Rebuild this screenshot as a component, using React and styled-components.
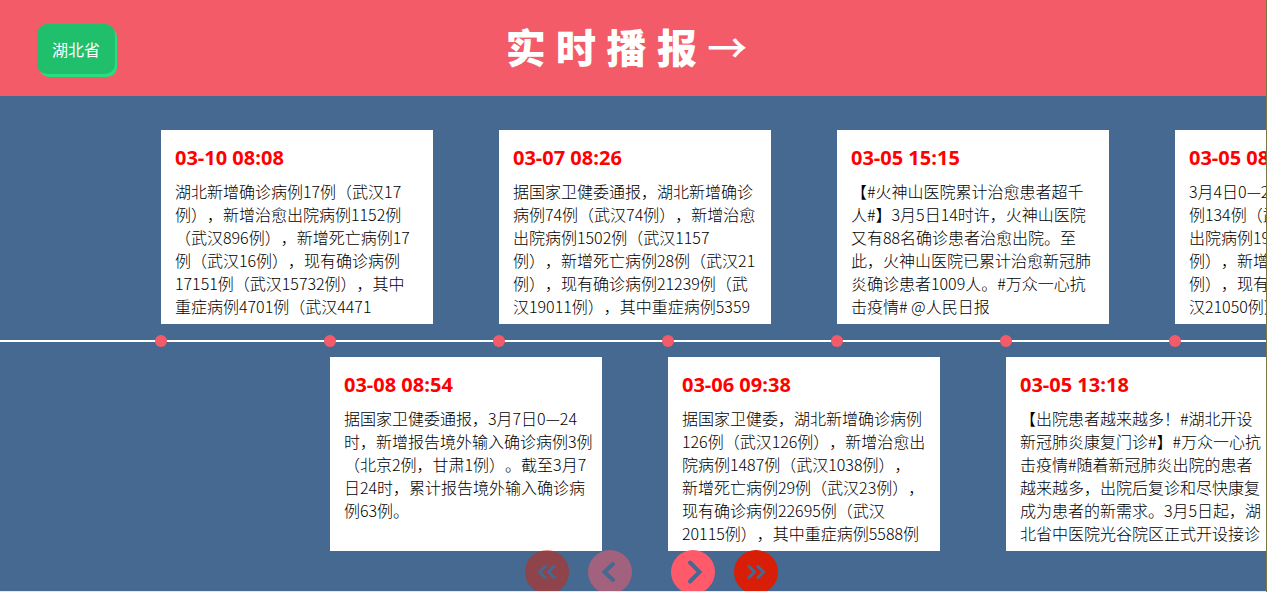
import React from "react";
import styled, { createGlobalStyle } from "styled-components";

const GlobalStyle = createGlobalStyle`
  *, *::before, *::after { box-sizing: border-box; }
  body {
    margin: 0;
    background: #dfe8f2;
    font-family: "Open Sans", "Noto Sans CJK SC", sans-serif;
    text-spacing-trim: space-all;
  }
`;

const Page = styled.div`
  min-height: 100vh;
  overflow: hidden;
  border-right: 1px solid #7a7346;
`;

const Header = styled.header`
  display: grid;
  grid-template-columns: 1fr auto 1fr;
  align-items: center;
  height: 96px;
  padding: 0 50px 0 37px;
  background: #f45b69;
`;

const RegionButton = styled.button`
  justify-self: start;
  width: 78px;
  height: 50px;
  margin-top: 2px;
  padding: 0;
  border: 0;
  border-radius: 10px;
  background: #20bf6b;
  box-shadow: 2px 3px 0 #26de81;
  color: #fff;
  font: 400 16px/24px "Noto Sans CJK SC", sans-serif;
`;

const Title = styled.h1`
  margin: 0;
  color: #fff;
  font-size: 40px;
  line-height: 56px;
  font-weight: 900;
  white-space: nowrap;
`;

const Arrow = styled.span`
  font-weight: 500;
`;

const Stage = styled.main`
  padding-top: 34px;
  background: #456990;
`;

const Timeline = styled.div`
  display: grid;
  grid-template-columns: 161px repeat(8, 169px);
  grid-template-rows: 194px 33px 194px;
  align-items: center;
`;

const Card = styled.article`
  grid-column: ${(p) => p.$slot + 2} / span 2;
  grid-row: ${(p) => (p.$slot % 2 ? 3 : 1)};
  width: 272px;
  height: 194px;
  padding: 14px;
  overflow: hidden;
  background: #fff;
`;

const Time = styled.time`
  display: block;
  margin-bottom: 8px;
  color: #f00;
  font-size: 20px;
  line-height: 28px;
  font-weight: 700;
`;

const Text = styled.p`
  margin: 0;
  color: #000;
  font: 300 16px/23px "Noto Sans CJK SC", sans-serif;
  white-space: pre;
`;

const Axis = styled.div`
  grid-column: 1 / -1;
  grid-row: 2;
  height: 2px;
  background: #fff;
`;

const Dot = styled.span`
  grid-column: ${(p) => p.$slot + 2};
  grid-row: 2;
  width: 12px;
  height: 12px;
  margin-left: -6px;
  border-radius: 50%;
  background: #f45b69;
`;

const Controls = styled.nav`
  position: relative;
  display: flex;
  justify-content: center;
  gap: 39px;
  height: 41px;
  margin-top: -1px;
  padding-left: 36px;
  overflow: hidden;
`;

const Pair = styled.div`
  display: flex;
  gap: 19px;
`;

const RoundButton = styled.button`
  display: grid;
  place-items: center;
  width: 44px;
  height: 44px;
  padding: 0;
  border: 0;
  border-radius: 50%;
  background: ${(p) => (p.$jump ? "#d81e06" : "#ff5a69")};
  opacity: ${(p) => (p.disabled ? 0.5 : 1)};

  svg {
    fill: none;
    stroke: #456990;
    stroke-linejoin: miter;
  }
`;

const items = [
  {
    time: "03-10 08:08",
    text: `湖北新增确诊病例17例（武汉17
例），新增治愈出院病例1152例
（武汉896例），新增死亡病例17
例（武汉16例），现有确诊病例
17151例（武汉15732例），其中
重症病例4701例（武汉4471`,
  },
  {
    time: "03-08 08:54",
    text: `据国家卫健委通报，3月7日0—24
时，新增报告境外输入确诊病例3例
（北京2例，甘肃1例）。截至3月7
日24时，累计报告境外输入确诊病
例63例。`,
  },
  {
    time: "03-07 08:26",
    text: `据国家卫健委通报，湖北新增确诊
病例74例（武汉74例），新增治愈
出院病例1502例（武汉1157
例），新增死亡病例28例（武汉21
例），现有确诊病例21239例（武
汉19011例），其中重症病例5359`,
  },
  {
    time: "03-06 09:38",
    text: `据国家卫健委，湖北新增确诊病例
126例（武汉126例），新增治愈出
院病例1487例（武汉1038例），
新增死亡病例29例（武汉23例），
现有确诊病例22695例（武汉
20115例），其中重症病例5588例`,
  },
  {
    time: "03-05 15:15",
    text: `【#火神山医院累计治愈患者超千
人#】3月5日14时许，火神山医院
又有88名确诊患者治愈出院。至
此，火神山医院已累计治愈新冠肺
炎确诊患者1009人。#万众一心抗
击疫情# @人民日报`,
  },
  {
    time: "03-05 13:18",
    text: `【出院患者越来越多！#湖北开设
新冠肺炎康复门诊#】#万众一心抗
击疫情#随着新冠肺炎出院的患者
越来越多，出院后复诊和尽快康复
成为患者的新需求。3月5日起，湖
北省中医院光谷院区正式开设接诊`,
  },
  {
    time: "03-05 08:42",
    text: `3月4日0—24时，湖北新增病
例134例（武汉131例），新增
出院病例1923例（武汉1387
例），新增死亡病例31例（武
例），现有确诊病例23700例
汉21050例），其中重症病例`,
  },
];

function Chevron({ flip }) {
  return (
    <svg width="28" height="28" viewBox="0 0 28 28" strokeWidth="4" strokeLinecap="round" aria-hidden="true">
      <path d={flip ? "M17 6L8.5 14L17 22" : "M11 4.5L20.5 14L11 23.5"} />
    </svg>
  );
}

function DoubleChevron({ flip }) {
  return (
    <svg width="24" height="24" viewBox="0 0 24 24" strokeWidth="3" aria-hidden="true">
      <path
        d={
          flip
            ? "M11 5.5L4.5 12L11 18.5M20 5.5L13.5 12L20 18.5"
            : "M4 5.5L10.5 12L4 18.5M13 5.5L19.5 12L13 18.5"
        }
      />
    </svg>
  );
}

export default function App() {
  return (
    <Page>
      <GlobalStyle />
      <Header>
        <RegionButton type="button">湖北省</RegionButton>
        <Title>
          实 时 播 报 <Arrow>→</Arrow>
        </Title>
      </Header>
      <Stage>
        <Timeline>
          <Axis />
          {items.map((item, slot) => (
            <React.Fragment key={item.time}>
              <Card $slot={slot}>
                <Time>{item.time}</Time>
                <Text>{item.text}</Text>
              </Card>
              <Dot $slot={slot} />
            </React.Fragment>
          ))}
        </Timeline>
        <Controls aria-label="时间轴">
          <Pair>
            <RoundButton type="button" $jump disabled aria-label="最前">
              <DoubleChevron flip />
            </RoundButton>
            <RoundButton type="button" disabled aria-label="上一页">
              <Chevron flip />
            </RoundButton>
          </Pair>
          <Pair>
            <RoundButton type="button" aria-label="下一页">
              <Chevron />
            </RoundButton>
            <RoundButton type="button" $jump aria-label="最后">
              <DoubleChevron />
            </RoundButton>
          </Pair>
        </Controls>
      </Stage>
    </Page>
  );
}
